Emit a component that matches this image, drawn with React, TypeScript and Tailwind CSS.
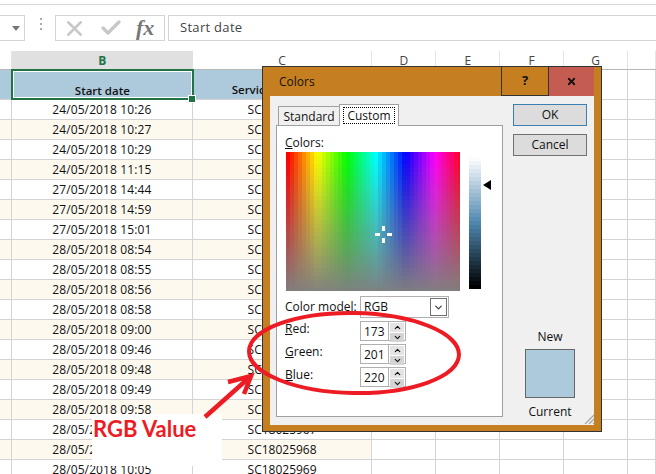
import { ChevronDown, ChevronUp, Check, X } from 'lucide-react'

const DATES = [
  '24/05/2018 10:26', '24/05/2018 10:27', '24/05/2018 10:29', '24/05/2018 11:15',
  '27/05/2018 14:44', '27/05/2018 14:59', '27/05/2018 15:01', '28/05/2018 08:54',
  '28/05/2018 08:55', '28/05/2018 08:56', '28/05/2018 08:58', '28/05/2018 09:00',
  '28/05/2018 09:46', '28/05/2018 09:48', '28/05/2018 09:49', '28/05/2018 09:58',
  '28/05/2018 10:00', '28/05/2018 10:01', '28/05/2018 10:05',
]

// the service column runs up to SC18025969 on the last row
const ROWS = DATES.map((date, i) => ({ date, service: `SC180259${51 + i}` }))

const TRAILING = ['w-[64px]', 'w-[64px]', 'w-[64px]', 'w-[64px]', 'w-[28px]']

function Row({ date, service, cream }: { date: string; service: string; cream: boolean }) {
  const bg = cream ? 'bg-[#fef9ef]' : 'bg-white'
  return (
    <div className="flex h-[20px] shrink-0">
      <div className={`w-[12px] border-r border-b border-[#d4d4d4] ${bg}`} />
      <div className={`w-[181px] border-r border-b border-[#d4d4d4] text-center leading-[20px] tracking-[0.12px] ${bg}`}>{date}</div>
      <div className={`w-[180px] border-r border-b border-[#d4d4d4] text-center leading-[20px] ${bg}`}>{service}</div>
      {TRAILING.map((w, i) => (
        <div key={i} className={`${w} border-r border-b border-[#d4d4d4]`} />
      ))}
    </div>
  )
}

function ColHead({ label, width }: { label: string; width: string }) {
  return (
    <div className={`${width} border-r border-[#e4e4e4] text-center text-[12px] leading-[19px] text-[#444]`}>{label}</div>
  )
}

function FormulaBar() {
  return (
    <div className="flex h-[47px] shrink-0 items-end border-t border-[#d8d8d8] pb-[10px] mt-[4px] bg-white">
      <div className="flex h-[26px] w-[25px] items-center justify-end border border-l-0 border-[#d4d4d4] pr-[4px]">
        <svg width="8" height="5" viewBox="0 0 8 5"><path d="M0 0h8L4 5z" fill="#777" /></svg>
      </div>
      <div className="flex w-[30px] flex-col items-center gap-[3px] self-center pt-[1px] pl-[1px]">
        <span className="h-[2px] w-[2px] bg-[#aaa]" />
        <span className="h-[2px] w-[2px] bg-[#aaa]" />
        <span className="h-[2px] w-[2px] bg-[#aaa]" />
      </div>
      <div className="flex h-[26px] w-[110px] items-center border border-[#d4d4d4]">
        <X size={25} strokeWidth={2.4} className="ml-[6px] text-[#c8c8c8]" />
        <Check size={24} strokeWidth={3.4} className="ml-[12px] text-[#c8c8c8]" />
        <span className="ml-[13px] font-['Liberation_Serif',serif] text-[22px] font-bold italic leading-none text-[#777]">fx</span>
      </div>
      <div className="ml-[3px] flex h-[26px] flex-1 items-center border border-r-0 border-[#d4d4d4] pl-[11px] text-[13px] tracking-[0.3px] text-[#444]">
        Start date
      </div>
    </div>
  )
}

function Sheet() {
  return (
    <div className="flex flex-col">
      <FormulaBar />
      <div className="flex h-[19px] shrink-0 border-b border-[#b8b8b8]">
        <div className="w-[12px] border-r border-[#e4e4e4]" />
        <div className="w-[181px] bg-[#e0e0e0] text-center text-[12px] font-bold leading-[19px] text-[#217346]">B</div>
        <ColHead label="C" width="w-[180px]" />
        <ColHead label="D" width="w-[64px]" />
        <ColHead label="E" width="w-[64px]" />
        <ColHead label="F" width="w-[64px]" />
        <ColHead label="G" width="w-[64px]" />
        <ColHead label="" width="w-[28px]" />
      </div>
      <div className="flex h-[30px] shrink-0">
        <div className="w-[11px] border-b border-[#d4d4d4] bg-[#adc9dc]" />
        <div className="relative z-10 -mt-[1px] w-[183px] border-2 border-[#217346] bg-[#adc9dc] pt-[11px] text-center text-[11.5px] font-semibold leading-[18px] shadow-[inset_0_0_0_1px_#fff]">
          Start date
          <span className="absolute -right-[3px] -bottom-[4px] h-[6px] w-[6px] bg-[#217346] outline outline-1 outline-white" />
        </div>
        <div className="w-[179px] border-b border-[#d4d4d4] bg-[#adc9dc] pt-[10px] text-center text-[11.5px] font-semibold leading-[20px]">Service Request ID</div>
        {TRAILING.map((w, i) => (
          <div key={i} className={`${w} border-r border-b border-[#d4d4d4]`} />
        ))}
      </div>
      {ROWS.map((r, i) => (
        <Row key={i} date={r.date} service={r.service} cream={i % 2 === 1} />
      ))}
    </div>
  )
}

// stepped colour field, same look as the Windows picker
function Spectrum() {
  const cols = 44
  const rows = 36
  const cells = []
  for (let x = 0; x < cols; x++) {
    for (let y = 0; y < rows; y++) {
      cells.push(
        <rect
          key={`${x}-${y}`}
          x={x * 4}
          y={y * 4}
          width="4.2"
          height="4.2"
          fill={`hsl(${(x / cols) * 360} ${100 - (y / (rows - 1)) * 100}% 50%)`}
        />
      )
    }
  }
  return (
    <svg width="174" height="139" viewBox="0 0 174 139" className="ml-[1px] block overflow-hidden">
      {cells}
      <g fill="#fff">
        <rect x="96" y="74" width="3" height="5" />
        <rect x="96" y="86" width="3" height="5" />
        <rect x="89" y="81" width="5" height="3" />
        <rect x="101" y="81" width="5" height="3" />
      </g>
    </svg>
  )
}

function LumBar() {
  const steps = 33
  return (
    <svg width="12" height="132" viewBox="0 0 12 132" className="block">
      {Array.from({ length: steps }, (_, i) => (
        <rect key={i} x="0" y={i * 4} width="12" height="4.2" fill={`hsl(205 38% ${99 - (i / (steps - 1)) * 99}%)`} />
      ))}
    </svg>
  )
}

function Spin({ label, underline, value, mt }: { label: string; underline: string; value: string; mt: string }) {
  return (
    <div className={`flex ${mt}`}>
      <div className="w-[75px] leading-[15px]">
        <span className="underline">{underline}</span>
        {label}
      </div>
      <div className="flex h-[20px] w-[46px] border border-[#b0b0b0] bg-white">
        <div className="w-[28px] border-r border-[#b0b0b0] pl-[3px] text-[12px] leading-[19px]">{value}</div>
        <div className="flex flex-1 flex-col gap-[1px] p-[1px]">
          <div className="flex flex-1 items-center justify-center bg-[#e4e4e4]"><ChevronUp size={9} strokeWidth={3} /></div>
          <div className="flex flex-1 items-center justify-center bg-[#d4d4d4]"><ChevronDown size={9} strokeWidth={3} /></div>
        </div>
      </div>
    </div>
  )
}

function ColorsDialog() {
  return (
    <div className="absolute left-[262px] top-[66px] flex h-[366px] w-[340px] flex-col border border-[#333] bg-[#c57f20] text-[12px] text-[#111]">
      <div className="flex h-[29px] shrink-0 pr-[7px]">
        <div className="flex-1 pl-[16px] leading-[29px]">Colors</div>
        <div className="flex w-[48px] items-center justify-center border-l border-b border-r border-[#333] text-[13px] font-bold">?</div>
        <div className="flex w-[45px] items-center justify-center bg-[#c45c52]">
          <X size={11} strokeWidth={4} />
        </div>
      </div>
      <div className="mx-[7px] mb-[6px] flex flex-1 bg-[#f0f0f0] pl-[6px] pt-[8px]">
        <div className="flex w-[227px] flex-col">
          <div className="flex h-[21px] items-end pl-[2px]">
            <div className="h-[19px] w-[62px] border border-b-0 border-[#a0a0a0] text-center leading-[20px]">Standard</div>
            <div className="relative z-10 -ml-[1px] -mb-[1px] flex h-[22px] w-[60px] items-center justify-center border border-b-0 border-[#a0a0a0] bg-white">
              <span className="border border-dotted border-black px-[3px] leading-[15px]">Custom</span>
            </div>
          </div>
          <div className="h-[292px] border border-[#a0a0a0] bg-white pl-[8px] pt-[9px]">
            <div className="leading-[16px]"><span className="underline">C</span>olors:</div>
            <div className="mt-[1px] flex">
              <Spectrum />
              <div className="relative ml-[9px] pt-[5px]">
                <LumBar />
                <svg width="8" height="10" viewBox="0 0 8 10" className="absolute -right-[10px] top-[28px]">
                  <path d="M8 0v10L0 5z" fill="#000" />
                </svg>
              </div>
            </div>
            <div className="mt-[5px] flex">
              <div className="w-[75px] leading-[21px]">Color model:</div>
              <div className="flex h-[22px] w-[89px] items-center border border-[#b0b0b0] bg-white pl-[3px] pr-[1px]">
                <span className="flex-1">RGB</span>
                <div className="flex h-[18px] w-[17px] items-center justify-center border border-[#707070]">
                  <ChevronDown size={11} strokeWidth={3} className="text-[#444]" />
                </div>
              </div>
            </div>
            <Spin underline="R" label="ed:" value="173" mt="mt-[3px]" />
            <Spin underline="G" label="reen:" value="201" mt="mt-[3px]" />
            <Spin underline="B" label="lue:" value="220" mt="mt-[3px]" />
          </div>
        </div>
        <div className="relative ml-[10px] flex w-[74px] flex-col">
          <button className="h-[22px] w-[74px] border border-[#3c7fb1] bg-[#dcdcdc] leading-[20px]">OK</button>
          <button className="mt-[8px] h-[22px] w-[74px] border border-[#707070] bg-[#dcdcdc] leading-[20px]">Cancel</button>
          <div className="mt-[173px] text-center leading-[16px]">New</div>
          <div className="mx-auto mt-[4px] h-[49px] w-[50px] border border-[#666] bg-[#adc9dc]" />
          <div className="mt-[6px] text-center leading-[16px]">Current</div>
        </div>
        <svg width="10" height="10" viewBox="0 0 10 10" className="absolute bottom-[7px] right-[7px]">
          <path d="M1 10 10 1M5 10l5-5M9 10l1-1" stroke="#a8a8a8" strokeWidth="1.4" />
        </svg>
      </div>
    </div>
  )
}

function Annotation() {
  return (
    <>
      <div className="absolute left-[92px] top-[414px] h-[52px] w-[130px] bg-white pl-[1px] pt-[2px] font-['Lato',sans-serif] text-[22px] font-bold leading-[26px] text-[#ed1c24]">
        RGB Value
      </div>
      <svg width="656" height="474" viewBox="0 0 656 474" className="absolute left-0 top-0 pointer-events-none" fill="none" stroke="#ed1c24" strokeWidth="4">
        <ellipse cx="354" cy="353" rx="105" ry="40" transform="rotate(1 354 353)" />
        <path d="M205 417 251 376M228 382l23-6-7 18" strokeWidth="4.5" />
      </svg>
    </>
  )
}

export default function App() {
  return (
    <div className="relative h-[474px] w-[656px] overflow-hidden bg-white font-['Open_Sans',sans-serif] text-[12px] text-[#111]">
      <Sheet />
      <ColorsDialog />
      <Annotation />
    </div>
  )
}
